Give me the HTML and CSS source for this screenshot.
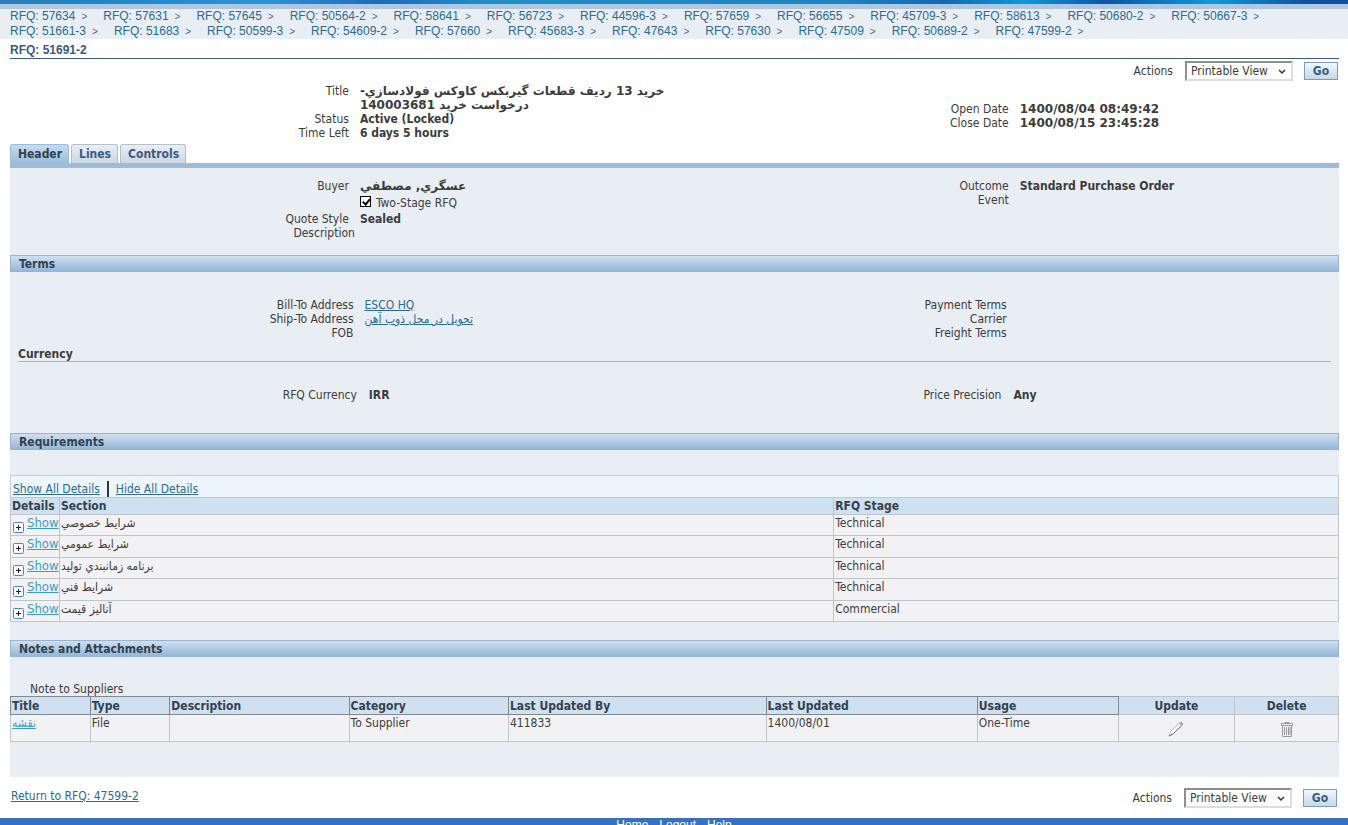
FILE: index.html
```html
<!DOCTYPE html>
<html lang="en">
<head>
<meta charset="utf-8">
<title>RFQ: 51691-2</title>
<link rel="stylesheet" href="styles.css">
</head>
<body>
<div class="page">
<div class="banner"></div>
<nav class="crumbs" aria-label="Breadcrumb">
<ol class="crumb-list">
<li><a href="#">RFQ: 57634</a></li><li><a href="#">RFQ: 57631</a></li><li><a href="#">RFQ: 57645</a></li><li><a href="#">RFQ: 50564-2</a></li><li><a href="#">RFQ: 58641</a></li><li><a href="#">RFQ: 56723</a></li><li><a href="#">RFQ: 44596-3</a></li><li><a href="#">RFQ: 57659</a></li><li><a href="#">RFQ: 56655</a></li><li><a href="#">RFQ: 45709-3</a></li><li><a href="#">RFQ: 58613</a></li><li><a href="#">RFQ: 50680-2</a></li><li><a href="#">RFQ: 50667-3</a></li><li><a href="#">RFQ: 51661-3</a></li><li><a href="#">RFQ: 51683</a></li><li><a href="#">RFQ: 50599-3</a></li><li><a href="#">RFQ: 54609-2</a></li><li><a href="#">RFQ: 57660</a></li><li><a href="#">RFQ: 45683-3</a></li><li><a href="#">RFQ: 47643</a></li><li><a href="#">RFQ: 57630</a></li><li><a href="#">RFQ: 47509</a></li><li><a href="#">RFQ: 50689-2</a></li><li><a href="#">RFQ: 47599-2</a></li>
</ol>
</nav>
<main class="content">
<h1 class="page-title">RFQ: 51691-2</h1>
<form class="actions">
<label for="actions-top">Actions</label>
<span class="select-box"><select id="actions-top"><option>Printable View</option></select><svg class="chevron" viewBox="0 0 8 6"><path d="M1 1l3 3 3-3"/></svg></span>
<button type="button" class="go">Go</button>
</form>

<section class="pair summary">
<dl class="fields">
<dt>Title</dt><dd class="wide rtl" dir="rtl">خريد 13 رديف قطعات گيربكس كاوكس فولادسازي-<br>درخواست خريد 140003681</dd>
<dt>Status</dt><dd>Active (Locked)</dd>
<dt>Time Left</dt><dd>6 days 5 hours</dd>
</dl>
<dl class="fields fields-right">
<dt>Open Date</dt><dd class="wide">1400/08/04 08:49:42</dd>
<dt>Close Date</dt><dd class="wide">1400/08/15 23:45:28</dd>
</dl>
</section>

<nav class="tabs" aria-label="Sections">
<a href="#" class="tab tab-active">Header</a><a href="#" class="tab">Lines</a><a href="#" class="tab">Controls</a>
</nav>

<div class="panel">
<section class="pair header-info">
<dl class="fields">
<dt>Buyer</dt><dd class="wide">عسگري, مصطفي</dd>
<dt></dt><dd class="stage"><label><input type="checkbox" class="check" checked><span>Two-Stage RFQ</span></label></dd>
<dt>Quote Style</dt><dd>Sealed</dd>
<dt class="shifted">Description</dt><dd></dd>
</dl>
<dl class="fields fields-right">
<dt>Outcome</dt><dd>Standard Purchase Order</dd>
<dt>Event</dt><dd></dd>
</dl>
</section>

<h2 class="section-bar">Terms</h2>
<section class="pair terms">
<dl class="fields">
<dt>Bill-To Address</dt><dd><a class="link" href="#">ESCO HQ</a></dd>
<dt>Ship-To Address</dt><dd><a class="link" href="#">تحويل در محل ذوب آهن</a></dd>
<dt>FOB</dt><dd></dd>
</dl>
<dl class="fields fields-right">
<dt>Payment Terms</dt><dd></dd>
<dt>Carrier</dt><dd></dd>
<dt>Freight Terms</dt><dd></dd>
</dl>
</section>
<h3 class="sub-title">Currency</h3>
<section class="pair currency">
<dl class="fields"><dt>RFQ Currency</dt><dd>IRR</dd></dl>
<dl class="fields fields-right"><dt>Price Precision</dt><dd>Any</dd></dl>
</section>

<h2 class="section-bar">Requirements</h2>
<section class="requirements">
<div class="toolbar"><a class="link" href="#">Show All Details</a><span class="divider"></span><a class="link" href="#">Hide All Details</a></div>
<table class="grid req-grid">
<colgroup><col class="c-details"><col class="c-section"><col></colgroup>
<thead><tr><th>Details</th><th>Section</th><th>RFQ Stage</th></tr></thead>
<tbody>
<tr><td><a href="#" class="show"><svg viewBox="0 0 11 11"><rect x=".5" y=".5" width="10" height="10" rx="1"/><path d="M3 5.5h5M5.5 3v5"/></svg><span>Show</span></a></td><td>شرايط خصوصي</td><td>Technical</td></tr>
<tr><td><a href="#" class="show"><svg viewBox="0 0 11 11"><rect x=".5" y=".5" width="10" height="10" rx="1"/><path d="M3 5.5h5M5.5 3v5"/></svg><span>Show</span></a></td><td>شرايط عمومي</td><td>Technical</td></tr>
<tr><td><a href="#" class="show"><svg viewBox="0 0 11 11"><rect x=".5" y=".5" width="10" height="10" rx="1"/><path d="M3 5.5h5M5.5 3v5"/></svg><span>Show</span></a></td><td>برنامه زمانبندي توليد</td><td>Technical</td></tr>
<tr><td><a href="#" class="show"><svg viewBox="0 0 11 11"><rect x=".5" y=".5" width="10" height="10" rx="1"/><path d="M3 5.5h5M5.5 3v5"/></svg><span>Show</span></a></td><td>شرايط فني</td><td>Technical</td></tr>
<tr><td><a href="#" class="show"><svg viewBox="0 0 11 11"><rect x=".5" y=".5" width="10" height="10" rx="1"/><path d="M3 5.5h5M5.5 3v5"/></svg><span>Show</span></a></td><td>آناليز قيمت</td><td>Commercial</td></tr>
</tbody>
</table>
</section>

<h2 class="section-bar">Notes and Attachments</h2>
<section class="notes">
<p class="note-label">Note to Suppliers</p>
<table class="grid notes-grid">
<colgroup><col class="n-title"><col class="n-type"><col class="n-desc"><col class="n-cat"><col class="n-by"><col class="n-date"><col class="n-usage"><col class="n-update"><col></colgroup>
<thead><tr><th class="sort">Title</th><th class="sort">Type</th><th class="sort">Description</th><th class="sort">Category</th><th class="sort">Last Updated By</th><th class="sort">Last Updated</th><th class="sort">Usage</th><th class="center">Update</th><th class="center">Delete</th></tr></thead>
<tbody><tr><td><a class="link link-light" href="#">نقشه</a></td><td>File</td><td></td><td>To Supplier</td><td>411833</td><td>1400/08/01</td><td>One-Time</td>
<td class="center"><button type="button" class="icon-btn" aria-label="Update"><svg viewBox="0 0 16 16"><path class="body" d="M1 15l1.500-4.500L12 1.500c1-1 3.500 1 2.500 2.500L5 13z"/><path class="shade" d="M14.500 3.500L5 13 1 15"/><path class="tip" d="M11 2.500l2.500 2.500 1.500-2-2-2z"/></svg></button></td>
<td class="center"><button type="button" class="icon-btn" aria-label="Delete"><svg viewBox="0 0 16 16"><path class="bin" d="M6 2.500v-1h4v1M2.500 2.500h11v2h-11zM3.500 4.500v11h9v-11M5.500 6v8M7.500 6v8M9.500 6v8M11 6v8"/></svg></button></td></tr></tbody>
</table>
</section>
</div>

<div class="bottom">
<a class="link" href="#">Return to RFQ: 47599-2</a>
<form class="actions">
<label for="actions-bottom">Actions</label>
<span class="select-box"><select id="actions-bottom"><option>Printable View</option></select><svg class="chevron" viewBox="0 0 8 6"><path d="M1 1l3 3 3-3"/></svg></span>
<button type="button" class="go">Go</button>
</form>
</div>
</main>
<footer class="footer"><a href="#">Home</a><a href="#">Logout</a><a href="#">Help</a></footer>
</div>
</body>
</html>
```
FILE: styles.css
```css
* { box-sizing: border-box; }
body {
  margin: 0;
  background: #fff;
  color: #3c3c3c;
  font: 12px/14px Tahoma, "DejaVu Sans Condensed", "Noto Sans", sans-serif;
}
.page { height: 100vh; overflow-y: auto; scrollbar-width: none; }
h1, h2, h3, p, dl, dd, ol { margin: 0; padding: 0; }
button, select { font: inherit; color: inherit; }

.banner {
  height: 9px;
  border-bottom: 5px solid #b3c6df;
  background: linear-gradient(90deg, #2f7cb8 0, #1c84c8 6%, #2b93d8 20%, #1a6cbc 28%, #1f8fc8 36%, #1c84c4 62%, #1169b4 70%, #0d9ad8 76%, #0a55a8 82%, #0f9ada 90%, #0a50a4 97%);
}
.crumbs { padding: 0 10px; background: #e9edf4; font: 12px/15px "Liberation Sans", Arial, sans-serif; }
.crumb-list { display: flex; flex-wrap: wrap; max-width: 1280px; list-style: none; }
.crumb-list li { margin-right: 16px; color: #44708c; white-space: nowrap; }
.crumb-list li::after { content: ">"; margin-left: 6px; font-size: 10px; }
.crumb-list a { color: #2b6c8e; text-decoration: none; }

.content { padding: 0 9px 0 10px; }
.page-title {
  padding: 4px 0 1px;
  border-bottom: 1px solid #3d5a80;
  color: #3d5a80;
  font: bold 12px/14px "Liberation Sans", Arial, sans-serif;
}
.actions { display: flex; justify-content: flex-end; align-items: center; padding: 2px 1px 0 0; }
.select-box { position: relative; margin: 0 11px 0 12px; }
.select-box select {
  display: block;
  width: 108px;
  height: 20px;
  padding: 0 4px;
  border: 2px solid;
  border-color: #8e8e8e #ddd #ddd #8e8e8e;
  border-radius: 0;
  background: #fff;
  appearance: none;
}
.chevron { position: absolute; right: 7px; top: 8px; width: 8px; height: 6px; fill: none; stroke: #333; stroke-width: 1.5; pointer-events: none; }
.go {
  width: 34px;
  height: 18px;
  padding: 0;
  border: 1px solid #7c9cb8;
  background: linear-gradient(#f2f8fb, #c4d9e6);
  color: #3d5a80;
  font-weight: bold;
}

.pair { display: grid; grid-template-columns: 1fr 1fr; }
.fields { display: grid; grid-template-columns: 51% 1fr; column-gap: 11px; align-content: start; }
.fields-right { grid-template-columns: 50.3% 1fr; }
.fields dt { min-height: 14px; text-align: right; white-space: nowrap; }
.fields dd { font-weight: bold; white-space: nowrap; }
.fields .wide { font-family: "DejaVu Sans", Verdana, sans-serif; }
.rtl { text-align: left; justify-self: start; }
.summary { padding-top: 3px; }
.summary .fields-right { padding-top: 18px; }

.tabs { display: flex; gap: 2px; margin-top: 4px; border-bottom: 5px solid #9cbcd8; }
.tab {
  height: 19px;
  padding: 2px 6px 2px 7px;
  border: 1px solid #b4c0cc;
  border-bottom: 0;
  border-radius: 3px 3px 0 0;
  background: linear-gradient(#e8eef5, #ccd7e2);
  color: #3d5a80;
  font-weight: bold;
  text-decoration: none;
}
.tab-active { border-color: #9cbcd8; background: linear-gradient(#c6dcf0, #9cbcd8); color: #33414e; }

.panel { padding-bottom: 35px; background: #e9edf4; }
.header-info { padding: 11px 0 15px; }
.stage { padding: 3px 0 2px; }
.stage label { display: flex; gap: 5px; font-weight: normal; line-height: 14px; }
.check {
  appearance: none;
  width: 11px;
  height: 11px;
  margin: 0;
  border: 1px solid #000;
  background: #fff;
  position: relative;
}
.check:checked::after {
  content: "";
  position: absolute;
  left: 3px;
  top: 0;
  width: 3px;
  height: 6px;
  border: solid #000;
  border-width: 0 2px 2px 0;
  transform: rotate(40deg);
}
.shifted { margin-right: -6px; }
.section-bar {
  padding: 1px 8px;
  border: 1px solid #9ab4d0;
  border-bottom: 0;
  background: linear-gradient(#cfdff0, #8fb5d8);
  color: #33414e;
  font-size: 12px;
  line-height: 14px;
}
.terms { padding: 26px 0 8px; }
.terms dd { font-weight: normal; }
.terms .fields { grid-template-columns: 51.7% 1fr; }
.terms .fields-right { grid-template-columns: 50% 1fr; }
.sub-title { margin: 0 8px; border-bottom: 1px solid #9cb8d4; font-size: 12px; line-height: 13px; }
.currency { padding: 26px 0 31px; }
.currency .fields { grid-template-columns: 52.2% 1fr; column-gap: 12px; }
.currency .fields-right { grid-template-columns: 49.2% 1fr; }

.link { color: #2b6c8e; text-decoration: underline; }
.link-light { color: #3e9cc4; }
.requirements { padding: 25px 0 18px; }
.toolbar { display: flex; align-items: center; height: 22px; padding: 4px 2px 0; border: 1px solid #c4ccd4; border-bottom: 0; background: #edf5fe; }
.divider { width: 2px; height: 16px; margin: 0 7px; background: #333; }
.grid { width: 100%; table-layout: fixed; border-collapse: collapse; background: #f2f2f4; }
.grid th, .grid td { padding: 1px; border: 1px solid #c0c4cc; text-align: left; vertical-align: top; }
.grid th { background: #cfe0f0; color: #33414e; }
.req-grid tbody tr { height: 21px; }
.req-grid tbody tr:nth-child(even) { height: 22px; }
.c-details { width: 49px; }
.c-section { width: 58.3%; }
.show { display: flex; gap: 3px; height: 17px; padding-left: 1px; color: #3e9cc4; font-size: 13px; text-decoration: none; }
.show span { text-decoration: underline; }
.show svg { flex: none; align-self: flex-end; width: 11px; height: 11px; fill: #f8fbff; stroke: #5584b4; }
.show path { stroke: #222; }

.notes { padding-top: 25px; }
.note-label { padding-left: 20px; }
.notes-grid tbody tr { height: 27px; }
.grid .sort { border-color: #808890; }
.notes-grid th { padding-top: 2px; }
.grid .center { text-align: center; }
.n-title { width: 6%; }
.n-type { width: 6%; }
.n-desc { width: 13.5%; }
.n-cat { width: 12%; }
.n-by { width: 19.4%; }
.n-date { width: 15.9%; }
.n-usage { width: 10.6%; }
.n-update { width: 8.8%; }
.icon-btn { padding: 5px 0 0; border: 0; background: none; }
.icon-btn svg { display: block; width: 16px; height: 16px; fill: none; stroke: #999; }
.icon-btn .body { fill: #fff; stroke: #b4b4b4; }
.icon-btn .shade { stroke: #777; }
.icon-btn .tip { fill: #aaa; stroke: none; }

.bottom { display: flex; justify-content: space-between; align-items: flex-start; padding: 9px 1px 10px; }
.bottom > .link { margin-top: 3px; }
.footer { display: flex; justify-content: center; gap: 11px; padding-bottom: 8px; background: #3670c0; font: 12px/15px "Liberation Sans", Arial, sans-serif; }
.footer a { color: #fff; text-decoration: none; }
```
